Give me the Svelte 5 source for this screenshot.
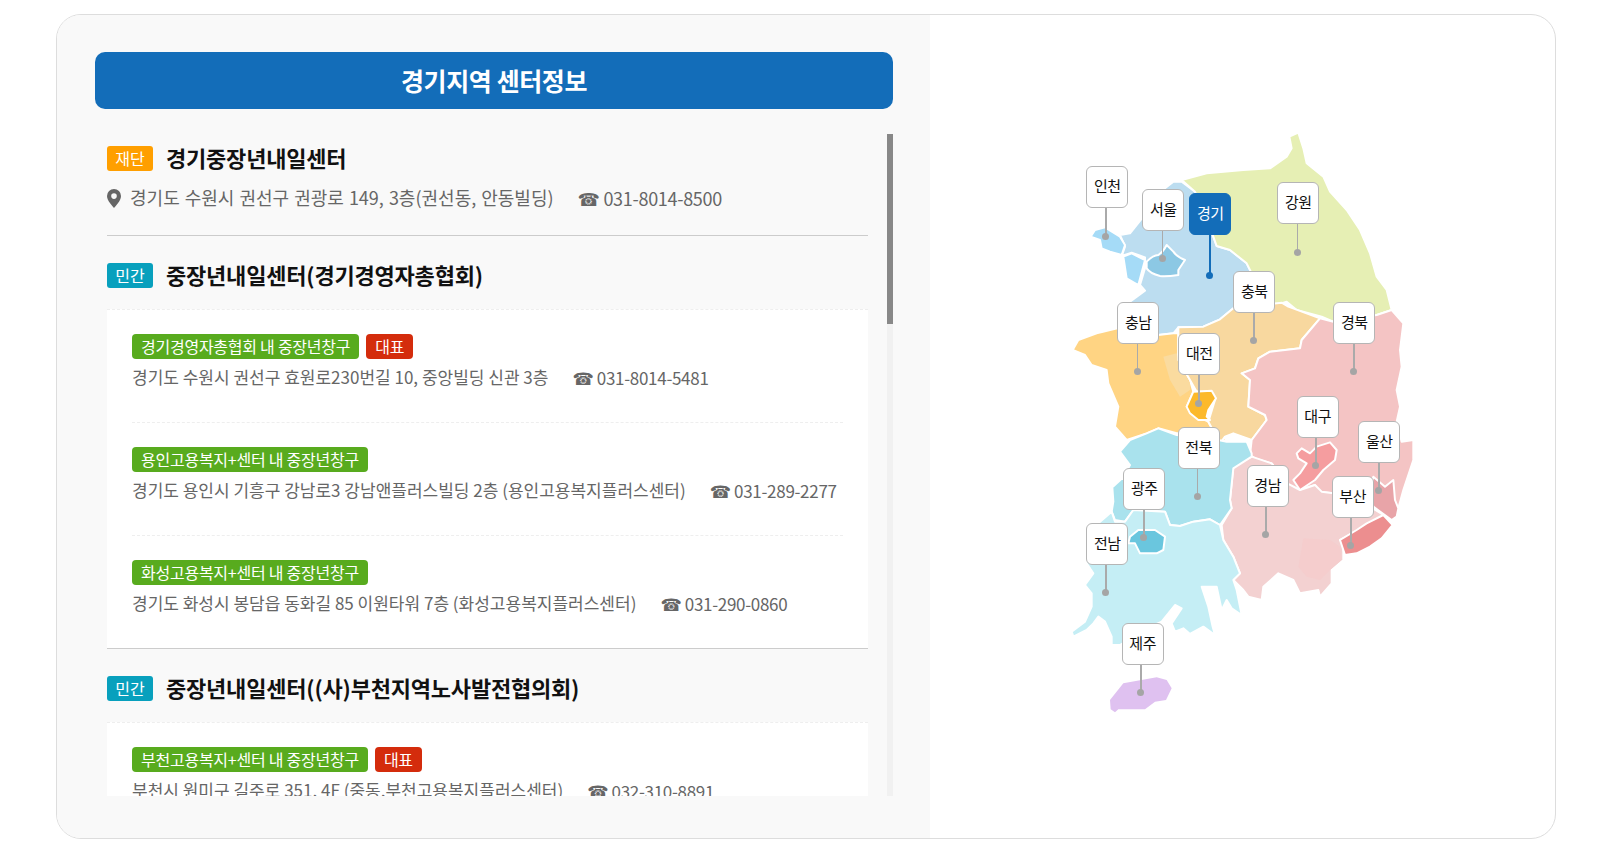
<script>
  const sections = [
    {
      kind: '민간',
      title: '중장년내일센터(경기경영자총협회)',
      items: [
        { tag: '경기경영자총협회 내 중장년창구', main: true, addr: '경기도 수원시 권선구 효원로230번길 10, 중앙빌딩 신관 3층', tel: '031-8014-5481' },
        { tag: '용인고용복지+센터 내 중장년창구', addr: '경기도 용인시 기흥구 강남로3 강남앤플러스빌딩 2층 (용인고용복지플러스센터)', tel: '031-289-2277' },
        { tag: '화성고용복지+센터 내 중장년창구', addr: '경기도 화성시 봉담읍 동화길 85 이원타워 7층 (화성고용복지플러스센터)', tel: '031-290-0860' }
      ]
    },
    {
      kind: '민간',
      title: '중장년내일센터((사)부천지역노사발전협의회)',
      items: [
        { tag: '부천고용복지+센터 내 중장년창구', main: true, addr: '부천시 원미구 길주로 351, 4F (중동,부천고용복지플러스센터)', tel: '032-310-8891' }
      ]
    }
  ];

  // map shapes are traced at 3x, the svg viewBox scales them back down
  const regions = [
    { fill: '#bcddf0', d: 'M455,185 L430,185 L405,205 L340,290 L300,340 L270,345 L285,380 L275,408 L305,398 L345,412 L345,445 L330,495 L345,512 L300,545 L270,590 L300,640 L385,645 L430,640 L445,622 L520,620 L570,598 L610,565 L650,540 L700,530 L650,430 L600,390 L560,378 L550,350 L530,300 L495,215 Z' },
    { fill: '#e6efb4', d: 'M455,180 L530,160 L640,150 L720,145 L770,110 L785,85 L778,50 L805,38 L820,85 L830,130 L880,170 L900,215 L950,270 L990,330 L1020,400 L1040,470 L1070,510 L1085,570 L1040,585 L910,605 L875,590 L800,570 L770,545 L740,555 L700,530 L650,430 L600,390 L560,378 L550,350 L530,300 L495,215 Z' },
    { fill: '#a5dbf7', d: 'M182,350 L195,330 L225,322 L270,350 L285,375 L275,405 L240,395 L215,385 L210,360 Z M280,410 L305,400 L345,420 L325,495 L290,475 Z' },
    { fill: '#8cc8e4', d: 'M350,425 Q370,405 385,405 Q400,395 410,375 L430,395 Q440,410 465,420 L445,450 L445,465 Q410,470 390,468 Q360,460 350,445 Z' },
    { fill: '#ffd483', d: 'M262,625 L300,640 L385,645 L430,640 L445,640 L445,720 L480,780 L490,815 L470,860 L490,885 L535,905 L570,970 L590,960 L565,940 L440,940 L385,925 L350,940 L290,960 L255,920 L265,860 L235,790 L230,750 L185,735 L165,705 L128,690 L145,660 L200,640 Z' },
    { fill: '#fadb9f', stroke: 'none', d: 'M400,710 L440,700 L450,730 L480,790 L480,810 L450,830 L420,780 Z' },
    { fill: '#f8d89f', d: 'M445,640 L445,622 L520,620 L570,598 L610,565 L755,548 L775,560 L870,595 L815,660 L810,685 L720,695 L685,715 L675,745 L635,760 L660,780 L655,860 L705,885 L710,900 L665,960 L610,940 L585,950 L570,970 L535,905 L555,840 L540,815 L500,815 L480,780 L445,720 Z' },
    { fill: '#fcb92b', d: 'M470,860 L490,815 L545,812 L558,835 L535,870 L530,890 L540,900 L505,900 L480,880 Z' },
    { fill: '#f4c4c4', d: 'M870,595 L910,605 L1040,585 L1085,570 L1120,610 L1110,690 L1115,740 L1100,810 L1110,860 L1100,905 L1115,965 L1150,960 L1150,1020 L1120,1110 L1105,1165 L1090,1190 L1030,1150 L910,1120 L865,1115 L855,1095 L810,1110 L780,1100 L725,1030 L675,1015 L660,1005 L665,960 L710,900 L705,885 L655,860 L660,780 L635,760 L675,745 L685,715 L720,695 L810,685 L815,660 Z' },
    { fill: '#f3d1d1', d: 'M665,1010 L725,1030 L772,1090 L810,1110 L855,1095 L875,1115 L910,1120 L1020,1160 L1085,1200 L1060,1190 L930,1260 L940,1270 L940,1320 L905,1350 L905,1390 L870,1430 L865,1410 L810,1420 L790,1380 L745,1360 L700,1400 L695,1440 L655,1430 L640,1410 L610,1380 L630,1360 L610,1310 L580,1260 L575,1215 L605,1165 L600,1140 L610,1040 Z' },
    { fill: '#f5cdcd', stroke: 'none', d: 'M820,1255 L900,1260 L930,1280 L935,1320 L900,1350 L870,1380 L830,1370 L805,1340 Z' },
    { fill: '#f59d9f', d: 'M800,1000 L815,985 L840,1000 L860,980 L900,967 L920,990 L915,1020 L880,1050 L855,1080 L810,1110 L790,1080 L810,1060 L830,1030 L805,1015 Z' },
    { fill: '#e8a4a8', d: 'M1030,1070 L1065,1100 L1090,1080 L1095,1140 L1105,1165 L1100,1190 L1085,1200 L1030,1160 L1020,1110 Z' },
    { fill: '#ec8e8f', d: 'M930,1260 L980,1230 L1010,1210 L1060,1185 L1088,1215 L1055,1255 L1020,1280 L980,1300 L945,1305 Z' },
    { fill: '#a9e2ed', d: 'M270,995 L300,960 L350,940 L385,925 L440,945 L565,960 L590,965 L650,965 L665,1000 L665,1010 L610,1045 L600,1140 L605,1165 L570,1215 L540,1198 L490,1205 L450,1218 L420,1215 L405,1175 L340,1170 L280,1070 L300,1035 Z M247,1102 L280,1072 L300,1140 L310,1170 L285,1205 L255,1200 L245,1175 L250,1145 Z' },
    { fill: '#c5eef5', d: 'M245,1175 L255,1205 L285,1205 L310,1170 L405,1175 L420,1215 L450,1218 L490,1205 L540,1198 L570,1215 L580,1260 L610,1310 L630,1360 L610,1380 L620,1410 L635,1485 L605,1465 L590,1440 L575,1470 L560,1400 L515,1400 L535,1460 L548,1520 L555,1545 L520,1520 L480,1542 L460,1525 L435,1535 L425,1510 L455,1465 L435,1455 L395,1505 L340,1530 L270,1575 L245,1575 L245,1550 L225,1505 L205,1490 L190,1510 L170,1530 L130,1550 L125,1535 L165,1505 L185,1460 L185,1420 L165,1395 L190,1360 L170,1330 L170,1270 L205,1210 Z' },
    { fill: '#6ac6de', d: 'M300,1250 L325,1230 L375,1230 L405,1250 L400,1290 L380,1300 L330,1300 L315,1270 L295,1270 Z' },
    { fill: '#dfc1f0', stroke: 'none', d: 'M240,1740 L280,1690 L380,1672 L410,1680 L425,1705 L408,1740 L375,1745 L345,1768 L265,1768 L255,1777 L242,1768 Z' }
  ];

  // box corner and dot centre of each pin, same 3x space as the shapes
  const pins = [
    { name: '인천', x: 169, y: 139, dx: 228, dy: 351 },
    { name: '서울', x: 337, y: 208, dx: 398, dy: 417 },
    { name: '경기', x: 478, y: 218, dx: 540, dy: 467, active: true },
    { name: '강원', x: 742, y: 187, dx: 802, dy: 399 },
    { name: '충북', x: 610, y: 452, dx: 672, dy: 661 },
    { name: '충남', x: 262, y: 545, dx: 322, dy: 756 },
    { name: '경북', x: 910, y: 545, dx: 972, dy: 756 },
    { name: '대전', x: 445, y: 638, dx: 507, dy: 850 },
    { name: '대구', x: 800, y: 827, dx: 858, dy: 1037 },
    { name: '울산', x: 985, y: 902, dx: 1047, dy: 1112 },
    { name: '부산', x: 905, y: 1067, dx: 963, dy: 1277 },
    { name: '경남', x: 650, y: 1035, dx: 708, dy: 1242 },
    { name: '전북', x: 443, y: 920, dx: 503, dy: 1131 },
    { name: '광주', x: 280, y: 1043, dx: 342, dy: 1254 },
    { name: '전남', x: 169, y: 1208, dx: 228, dy: 1419 },
    { name: '제주', x: 275, y: 1508, dx: 333, dy: 1719 }
  ];
</script>

<div class="card">
  <div class="left">
    <h2 class="bar">경기지역 센터정보</h2>
    <div class="scroll">
      <div class="list">
        <section class="first">
          <div class="head">
            <span class="kind orange">재단</span>
            <strong>경기중장년내일센터</strong>
          </div>
          <p class="addr top">
            <svg class="marker" viewBox="0 0 14 19"><path fill-rule="evenodd" d="M7 0a7 7 0 0 0-7 7c0 4.600 5 9.600 7 12 2-2.400 7-7.400 7-12a7 7 0 0 0-7-7zm0 4.300a2.800 2.800 0 1 1 0 5.600 2.800 2.800 0 0 1 0-5.600z"/></svg>
            경기도 수원시 권선구 권광로 149, 3층(권선동, 안동빌딩)<span class="tel"><i>☎</i> 031-8014-8500</span>
          </p>
        </section>
        {#each sections as s}
          <section>
            <div class="head">
              <span class="kind teal">{s.kind}</span>
              <strong>{s.title}</strong>
            </div>
            <div class="box">
              {#each s.items as item}
                <div class="item">
                  <div class="tags">
                    <span class="tag">{item.tag}</span>
                    {#if item.main}<span class="tag red">대표</span>{/if}
                  </div>
                  <p class="addr">{item.addr}<span class="tel"><i>☎</i> {item.tel}</span></p>
                </div>
              {/each}
            </div>
          </section>
        {/each}
      </div>
      <div class="track"><div class="thumb"></div></div>
    </div>
  </div>

  <div class="right">
    <div class="map">
      <svg viewBox="0 0 1200 1800" width="400" height="600">
        {#each regions as r}
          <path d={r.d} fill={r.fill} stroke={r.stroke ?? '#fff'} stroke-width="6" stroke-linejoin="round" />
        {/each}
      </svg>
      {#each pins as p}
        <div class="pin" class:active={p.active} style="left:{p.x / 3}px;top:{p.y / 3}px">
          <span class="label">{p.name}</span>
          <span class="stem" style="left:{(p.dx - p.x) / 3 - 0.75}px;height:{(p.dy - p.y) / 3 - 42}px"></span>
          <span class="dot" style="left:{(p.dx - p.x) / 3 - 3.5}px;top:{(p.dy - p.y) / 3 - 3.5}px"></span>
        </div>
      {/each}
    </div>
  </div>
</div>

<style>
  :global(body) {
    background: #fff;
    font-family: "Noto Sans CJK KR", "Noto Sans", sans-serif;
  }

  .card {
    display: flex;
    box-sizing: border-box;
    width: 1500px;
    height: 825px;
    margin: 14px 0 0 56px;
    border: 1px solid #ddd;
    border-radius: 25px;
    overflow: hidden;
  }

  .left {
    box-sizing: border-box;
    width: 873px;
    padding: 37px 37px 0 38px;
    background: #f9f9f9;
  }

  .bar {
    height: 57px;
    margin: 0 0 25px;
    border-radius: 10px;
    background: #136db9;
    color: #fff;
    font-size: 25px;
    font-weight: 700;
    letter-spacing: -0.4px;
    line-height: 57px;
    text-align: center;
  }

  .scroll {
    position: relative;
    height: 662px;
    padding: 0 25px 0 12px;
    overflow: hidden;
  }

  .track {
    position: absolute;
    top: 0;
    right: 0;
    width: 6px;
    height: 100%;
    background: #f1f1f1;
  }

  .thumb {
    height: 190px;
    background: #888;
  }

  section {
    padding-top: 27px;
    border-bottom: 1px solid #ccc;
  }

  section.first {
    padding: 12px 0 23px;
  }

  .head {
    display: flex;
    align-items: center;
    gap: 13px;
    height: 25px;
    margin-bottom: 21px;
  }

  .first .head {
    margin-bottom: 11px;
  }

  .kind {
    width: 46px;
    border-radius: 3px;
    color: #fff;
    font-size: 16px;
    line-height: 25px;
    text-align: center;
  }

  .orange { background: #ff9f00; }
  .teal { background: #08a0bd; }

  .head strong {
    padding-bottom: 3px;
    color: #111;
    font-size: 22px;
    font-weight: 700;
    letter-spacing: -0.2px;
    white-space: nowrap;
  }

  .box {
    padding: 0 25px;
    border-top: 1px dashed #eee;
    background: #fff;
  }

  .item {
    padding: 24px 0 30px;
    border-bottom: 1px dashed #eee;
  }

  .item:last-child {
    border-bottom: 0;
  }

  .tags {
    display: flex;
    gap: 7px;
    height: 25px;
  }

  .tag {
    padding: 0 9px;
    border-radius: 4px;
    background: #58ab1e;
    color: #fff;
    font-size: 16px;
    letter-spacing: -0.25px;
    line-height: 25px;
  }

  .tag.red {
    background: #d42c0c;
  }

  .addr {
    margin: 3px 0 0;
    color: #666;
    font-size: 17px;
    line-height: 30px;
    white-space: nowrap;
  }

  .addr.top {
    font-size: 18px;
    margin: 0;
    word-spacing: 1px;
  }

  .marker {
    width: 14px;
    height: 19px;
    margin-right: 4px;
    fill: #666;
    vertical-align: -3px;
  }

  .tel {
    margin-left: 24px;
    position: relative;
    top: 1px;
    letter-spacing: -0.3px;
    word-spacing: 0;
  }

  .tel i {
    font-family: "DejaVu Sans", sans-serif;
    font-style: normal;
    line-height: 0;
  }

  .right {
    flex: 1;
    padding: 105px 0 0 100px;
  }

  .map {
    position: relative;
    width: 400px;
    height: 600px;
  }

  .map svg {
    display: block;
  }

  .pin {
    position: absolute;
  }

  .label {
    position: relative;
    z-index: 2;
    display: block;
    box-sizing: border-box;
    width: 42px;
    height: 42px;
    border: 1px solid #b5b5b5;
    border-radius: 6px;
    background: #fff;
    color: #111;
    font-size: 15px;
    letter-spacing: -0.5px;
    line-height: 38px;
    text-align: center;
  }

  .stem {
    position: absolute;
    top: 42px;
    width: 1.500px;
    background: #aaa;
  }

  .dot {
    position: absolute;
    width: 7px;
    height: 7px;
    border-radius: 50%;
    background: #a5a5a5;
  }

  .active .label {
    border-color: #136db9;
    background: #136db9;
    color: #fff;
  }

  .active .stem {
    width: 2px;
    background: #136db9;
  }

  .active .dot {
    background: #136db9;
  }
</style>
